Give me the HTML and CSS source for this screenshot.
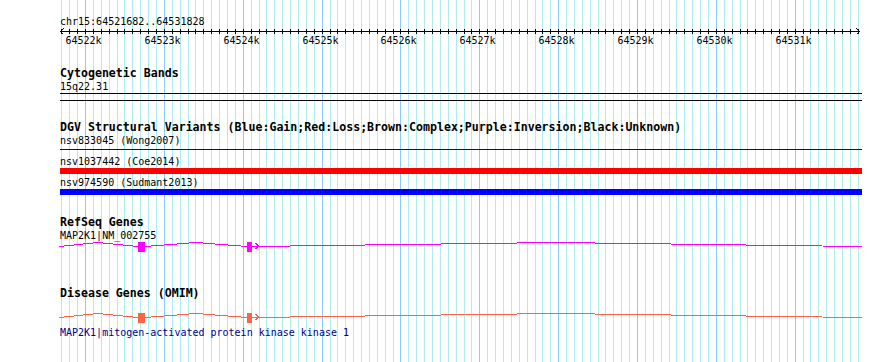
FILE: index.html
```html
<!DOCTYPE html>
<html lang="en">
<head>
  <meta charset="UTF-8" />
  <meta name="viewport" content="width=device-width, initial-scale=1.0"/>
  <title>chr15:64521682..64531828</title>
  <link rel="stylesheet" href="styles.css">
</head>
<body>
  <div class="panel">
    <svg class="grid" id="grid" width="800" height="362"></svg>

    <div class="track ruler-track">
      <div class="feature-name">chr15:64521682..64531828</div>
      <svg class="ruler" id="ruler" width="800" height="22"></svg>
    </div>

    <div class="track cyto-track">
      <div class="track-label">Cytogenetic Bands</div>
      <div class="feature-name">15q22.31</div>
      <svg class="glyph" width="802" height="8">
        <line x1="0" y1="0.5" x2="802" y2="0.5" stroke="#000"/>
        <line x1="0" y1="7.5" x2="802" y2="7.5" stroke="#000"/>
      </svg>
    </div>

    <div class="track dgv-track">
      <div class="track-label">DGV Structural Variants (Blue:Gain;Red:Loss;Brown:Complex;Purple:Inversion;Black:Unknown)</div>
      <div class="feature-name">nsv833045 (Wong2007)</div>
      <svg class="glyph" width="802" height="8">
        <line x1="0" y1="2.5" x2="802" y2="2.5" stroke="#0000c0"/>
      </svg>
      <div class="feature-name">nsv1037442 (Coe2014)</div>
      <svg class="glyph" width="802" height="8">
        <rect x="0" y="0" width="802" height="6" fill="#ff0000"/>
      </svg>
      <div class="feature-name">nsv974590 (Sudmant2013)</div>
      <svg class="glyph" width="802" height="8">
        <rect x="0" y="0" width="802" height="6" fill="#0000ff"/>
      </svg>
    </div>

    <div class="track refseq-track">
      <div class="track-label">RefSeq Genes</div>
      <div class="feature-name">MAP2K1|NM_002755</div>
      <svg class="glyph gene refseq" width="802" height="12">
        <polyline points="-1,4.5 38,0.5 78,4.5"/>
        <polyline points="85,4.5 136,0.5 187,4.5"/>
        <polyline points="192,4.5 496,0.5 800,4.5 802,4.5"/>
        <polyline points="195.5,1 198.5,4 195.5,7"/>
        <rect class="exon" x="78" y="0" width="7" height="10"/>
        <rect class="exon" x="187" y="0" width="5" height="10"/>
      </svg>
    </div>

    <div class="track omim-track">
      <div class="track-label">Disease Genes (OMIM)</div>
      <div class="spacer"></div>
      <svg class="glyph gene omim" width="802" height="13">
        <polyline points="-1,4.5 38,0.5 78,4.5"/>
        <polyline points="85,4.5 136,0.5 187,4.5"/>
        <polyline points="192,4.5 496,0.5 800,4.5 802,4.5"/>
        <polyline points="195.5,1 198.5,4 195.5,7"/>
        <rect class="exon" x="78" y="0" width="7" height="10"/>
        <rect class="exon" x="187" y="0" width="5" height="10"/>
      </svg>
      <div class="feature-name description">MAP2K1|mitogen-activated protein kinase kinase 1</div>
    </div>
  </div>

  <script>
    const START = 64521682, END = 64531828, WIDTH = 800;
    const scale = WIDTH / (END - START);
    const toX = pos => Math.round((pos - START) * scale);
    const NS = "http://www.w3.org/2000/svg";

    function add(parent, name, attrs, text) {
      const node = document.createElementNS(NS, name);
      for (const key in attrs) node.setAttribute(key, attrs[key]);
      if (text) node.textContent = text;
      parent.appendChild(node);
      return node;
    }

    const grid = document.getElementById("grid");
    const ruler = document.getElementById("ruler");

    // ruler baseline and arrow heads
    add(ruler, "line", { x1: 0, y1: 3.5, x2: 800, y2: 3.5, stroke: "#000" });
    add(ruler, "polyline", { points: "3.5,0.5 0.5,3.5 3.5,6.5", fill: "none", stroke: "#000" });
    add(ruler, "polyline", { points: "796.5,0.5 799.5,3.5 796.5,6.5", fill: "none", stroke: "#000" });

    for (let pos = 64521700; pos <= END; pos += 100) {
      const x = toX(pos) + 0.5;
      const major = pos % 1000 === 0;
      add(grid, "line", { x1: x, y1: 0, x2: x, y2: 362, class: major ? "major" : "minor" });
      add(ruler, "line", { x1: x, y1: 1, x2: x, y2: 6, stroke: "#000" });
      if (major) {
        add(ruler, "text", { x: toX(pos) - 19.5, y: 15.5 }, (pos / 1000) + "k");
      }
    }
  </script>
</body>
</html>
```

FILE: styles.css
```css
body {
  margin: 0;
  background: #ffffff;
  color: #000000;
  font-family: "DejaVu Sans Mono", "Liberation Mono", monospace;
}

.panel {
  position: relative;
  isolation: isolate;
  width: 800px;
  min-height: 362px;
  margin-left: 60px;
}

.grid {
  position: absolute;
  top: 0;
  left: 0;
  z-index: -1;
}

.grid .minor {
  stroke: #afeeee;
}

.grid .major {
  stroke: #87cefa;
}

svg {
  display: block;
  overflow: visible;
  shape-rendering: crispEdges;
}

.track-label {
  font-weight: bold;
  font-size: 11.6px;
  line-height: 13px;
  white-space: nowrap;
}

.feature-name {
  font-size: 10px;
  line-height: 13px;
  white-space: nowrap;
}

.ruler text {
  font-family: "DejaVu Sans Mono", "Liberation Mono", monospace;
  font-size: 10px;
  fill: #000000;
}

.ruler-track {
  padding-top: 15px;
}

.cyto-track {
  margin-top: 17px;
}

.dgv-track {
  margin-top: 20px;
}

.refseq-track {
  margin-top: 19px;
}

.omim-track {
  margin-top: 33px;
}

.spacer {
  height: 13px;
}

.gene polyline {
  fill: none;
  stroke-width: 1;
}

.refseq polyline {
  stroke: #ff00ff;
}

.refseq .exon {
  fill: #ff00ff;
}

.omim polyline {
  stroke: #ff6347;
}

.omim .exon {
  fill: #ff6347;
}

.description {
  color: #00008b;
}
```
